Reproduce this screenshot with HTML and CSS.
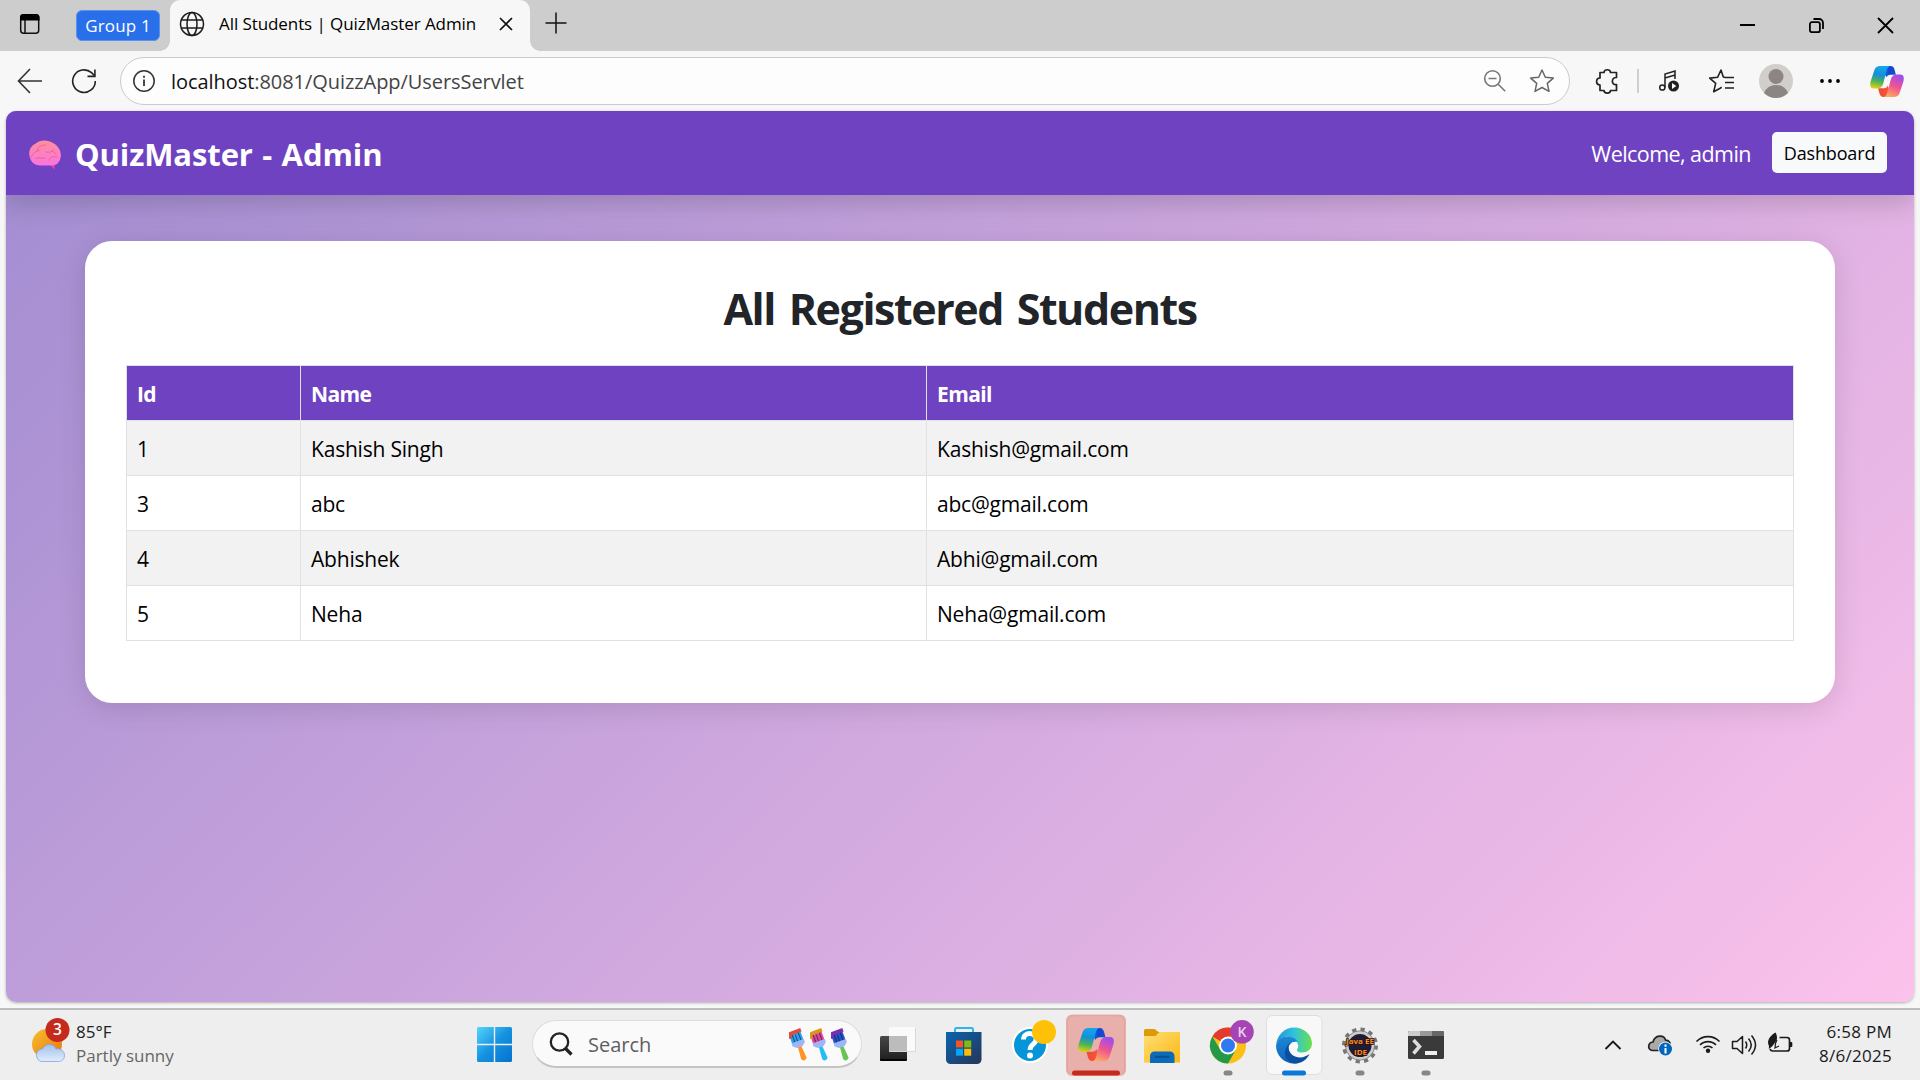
FILE: index.html
```html
<!DOCTYPE html>
<html lang="en">
<head>
<meta charset="utf-8">
<title>All Students | QuizMaster Admin</title>
<link rel="stylesheet" href="styles.css">
</head>
<body>
<svg class="defs" width="0" height="0" aria-hidden="true">
  <defs>
    <linearGradient id="cpBlue" x1="0.3" y1="0" x2="0.1" y2="1"><stop offset="0" stop-color="#10a5ee"/><stop offset=".35" stop-color="#168fd6"/><stop offset=".65" stop-color="#4db356"/><stop offset="1" stop-color="#f8d30b"/></linearGradient>
    <linearGradient id="cpNavy" x1="0" y1="0" x2="1" y2="0"><stop offset="0" stop-color="#10a0ee"/><stop offset=".6" stop-color="#1244cf"/><stop offset="1" stop-color="#1450d6"/></linearGradient>
    <linearGradient id="cpPink" x1="0.7" y1="0" x2="0.3" y2="1"><stop offset="0" stop-color="#9a4df0"/><stop offset=".5" stop-color="#ef5393"/><stop offset="1" stop-color="#ffab5c"/></linearGradient>
    <linearGradient id="cpRed" x1="0" y1="0" x2="1" y2="0"><stop offset="0" stop-color="#ff9a52"/><stop offset="0.5" stop-color="#f4503c"/><stop offset="1" stop-color="#ee4b35"/></linearGradient>
    <linearGradient id="win" x1="0" y1="0" x2="1" y2="1"><stop offset="0" stop-color="#55d5fb"/><stop offset=".5" stop-color="#1592e0"/><stop offset="1" stop-color="#0671cf"/></linearGradient>
    <linearGradient id="sun" x1="0" y1="0" x2="1" y2="1"><stop offset="0" stop-color="#f2c22d"/><stop offset="1" stop-color="#f0700f"/></linearGradient>
    <linearGradient id="cloud" x1="0" y1="0" x2="0" y2="1"><stop offset="0" stop-color="#9fc0ee"/><stop offset="1" stop-color="#e3edfa"/></linearGradient>
    <linearGradient id="brain" x1="0" y1="0" x2="0" y2="1"><stop offset="0" stop-color="#ff8f9c"/><stop offset="1" stop-color="#fb73df"/></linearGradient>
    <linearGradient id="store" x1="0" y1="0" x2="1" y2="1"><stop offset="0" stop-color="#0a64b0"/><stop offset="1" stop-color="#263558"/></linearGradient>
    <linearGradient id="folder" x1="0" y1="0" x2="1" y2="1"><stop offset="0" stop-color="#ffde76"/><stop offset="1" stop-color="#fcb813"/></linearGradient>
    <linearGradient id="edgeTop" x1="0" y1="0" x2="1" y2="0"><stop offset="0" stop-color="#1f93d8"/><stop offset=".5" stop-color="#30c2dc"/><stop offset="1" stop-color="#6be04a"/></linearGradient>
    <linearGradient id="edgeLeft" x1="0" y1="0" x2="0" y2="1"><stop offset="0" stop-color="#1c88d4"/><stop offset="1" stop-color="#0f62bd"/></linearGradient>
    <linearGradient id="dark" x1="0" y1="0" x2="0" y2="1"><stop offset="0" stop-color="#484848"/><stop offset="1" stop-color="#1d1d1d"/></linearGradient>
    <symbol id="copilot" viewBox="0 0 36 33">
      <path fill="url(#cpNavy)" d="M10 0H22C25.500 0 26 3.500 27.500 9.200H23C20 9.200 18.500 9.500 17.500 12L15 8Z"/>
      <path fill="url(#cpRed)" transform="rotate(180 18 16.500)" d="M10 0H22C25.500 0 26 3.500 27.500 9.200H23C20 9.200 18.500 9.500 17.500 12L15 8Z"/>
      <path fill="url(#cpBlue)" d="M11 0H22C18.500 0 17.800 4 16.500 9L14 18.500C13 22 11 24 7.500 24H4C0 24-.5 20.500 .7 16L4.500 4.500C5.600 1.300 7.500 0 11 0Z"/>
      <path fill="url(#cpPink)" d="M25 33H14C17.500 33 18.200 29 19.500 24L22 14.500C23 11 25 9 28.500 9H32C36 9 36.500 12.500 35.300 17L31.500 28.500C30.400 31.700 28.500 33 25 33Z"/>
    </symbol>
    <symbol id="brush" viewBox="0 0 20 34">
      <g transform="rotate(-20 10 17)">
        <path fill="currentColor" d="M8.300 18h3.400l1.100 13a2.900 2.900 0 0 1-5.600 0Z"/>
        <path class="bristle" d="M4 4h12v11H4z"/>
        <path fill="none" stroke="#20243d" stroke-width="1" opacity=".7" d="M7 5v8M10 6v7M13.500 5v8"/>
        <path fill="#9fb6f4" d="M3.500 13h13v3.300l-3.500 2.900H7l-3.500-2.900z"/>
        <path class="tip" d="M3 1.500h14v4l-2.500-1-2 1.500-2.500-1.500-2 1.500-2-1-.5 3.500-2.500-.5z"/>
      </g>
    </symbol>
  </defs>
</svg>

<header class="tabstrip">
  <svg class="tab-actions" width="24" height="24" viewBox="0 0 24 24"><rect x="2.700" y="2.700" width="18" height="18.500" rx="3" fill="none" stroke="#111" stroke-width="1.500"/><path d="M2 8.500V5.500a3.500 3.500 0 0 1 3.500-3.500h12.500a3.500 3.500 0 0 1 3.500 3.500v3z"/><path d="M7 8v13" stroke="#111" stroke-width="1.500"/></svg>
  <span class="group-chip">Group 1</span>
  <div class="tab">
    <svg width="26" height="26" viewBox="0 0 26 26" fill="none" stroke="#1c1c1c" stroke-width="1.500"><circle cx="13" cy="13" r="11.500"/><ellipse cx="13" cy="13" rx="5" ry="11.500"/><path d="M2.500 9h21M2.500 17h21"/></svg>
    <span class="tab-title">All Students | QuizMaster Admin</span>
    <svg class="tab-close" width="14" height="14" viewBox="0 0 14 14" stroke="#111" stroke-width="1.700"><path d="M1 1l12 12M13 1L1 13"/></svg>
  </div>
  <svg class="new-tab" width="22" height="22" viewBox="0 0 22 22" stroke="#111" stroke-width="1.500"><path d="M11 .5v21M.5 11h21"/></svg>
  <div class="window-buttons">
    <svg width="17" height="17" viewBox="0 0 17 17" stroke="#000" stroke-width="2"><path d="M1 8h15"/></svg>
    <svg width="17" height="17" viewBox="0 0 17 17" fill="none" stroke="#000" stroke-width="1.800"><rect x="1.900" y="5.200" width="10" height="10" rx="2"/><path d="M5.500 2h5.500a4 4 0 0 1 4 4v6"/></svg>
    <svg width="17" height="17" viewBox="0 0 17 17" stroke="#000" stroke-width="1.800"><path d="M1 1l15 15M16 1L1 16"/></svg>
  </div>
</header>

<div class="toolbar">
  <svg class="back" width="26" height="26" viewBox="0 0 26 26" fill="none" stroke="#333" stroke-width="1.600"><path d="M13 1L1.500 13 13 25M1.500 13H25"/></svg>
  <svg class="reload" width="26" height="26" viewBox="0 0 26 26" fill="none" stroke="#222" stroke-width="1.600"><path d="M24.300 13A11.300 11.300 0 1 1 20.500 4.700L23.800 8"/><path d="M23.900 1.500V8.400H16.500"/></svg>
  <div class="address">
    <svg width="24" height="24" viewBox="0 0 24 24" fill="none" stroke="#333" stroke-width="1.500"><circle cx="12" cy="12" r="10.200"/><path stroke-width="1.800" d="M12 10.500v6.500M12 6.800v2"/></svg>
    <span class="url"><span class="host">localhost</span>:8081/QuizzApp/UsersServlet</span>
    <svg class="zoom-out" width="24" height="24" viewBox="0 0 24 24" fill="none" stroke="#777" stroke-width="1.600"><circle cx="9.500" cy="9.500" r="7.800"/><path d="M15.200 15.200l7 7M5.500 9.500h8"/></svg>
    <svg class="favorite" width="26" height="26" viewBox="0 0 26 26" fill="none" stroke="#666" stroke-width="1.500" stroke-linejoin="round"><path d="M13 2l3.300 7.200 8 .9-6 5.300 1.700 8L13 19.500l-7 3.900 1.700-8-6-5.300 8-.9z"/></svg>
  </div>
  <svg class="extensions" width="26" height="26" viewBox="0 0 26 26" fill="none" stroke="#222" stroke-width="1.700" stroke-linejoin="round"><path d="M6 4.500H10C10 .8 16.500 .8 16.500 4.500H22.500V9.500C17 9 17 17.500 22.500 16.500V22.500H16.500C16.500 26 10 26 10 22.500H6V17C1.500 17 1.500 10 6 10Z"/></svg>
  <span class="divider"></span>
  <svg class="media" width="24" height="26" viewBox="0 0 24 26" fill="none" stroke="#222" stroke-width="1.500"><circle cx="4.300" cy="19.500" r="2.600"/><path d="M7 19.500V6l10-3v8M7 10l10-3"/><circle cx="15.500" cy="18" r="5.500" fill="#222" stroke="none"/><path fill="#fff" stroke="none" d="M14 15v6l4.300-3z"/></svg>
  <svg class="favorites-list" width="28" height="26" viewBox="0 0 28 26" fill="none" stroke="#222" stroke-width="1.600" stroke-linejoin="round"><path d="M17.500 9.500L15.300 9 13 2 9.700 9.200l-8 .9 6 5.300-2 8.300 6-3.200 2-1.200M17 9.500h9M17 14.500h9M17 20h9"/></svg>
  <svg class="avatar" width="34" height="34" viewBox="0 0 34 34"><circle cx="17" cy="17" r="17" fill="#d1cecb"/><circle cx="17" cy="12.500" r="7.500" fill="#8b8683"/><path fill="#8b8683" d="M5 29a13 13 0 0 1 24 0a17 17 0 0 1-24 0z"/></svg>
  <svg class="more" width="22" height="6" viewBox="0 0 22 6"><circle cx="3" cy="3" r="1.900"/><circle cx="11" cy="3" r="1.900"/><circle cx="19" cy="3" r="1.900"/></svg>
  <svg class="copilot-button" width="34" height="31"><use href="#copilot"/></svg>
</div>

<main class="page">
  <nav class="navbar">
    <svg class="brain" width="34" height="30" viewBox="0 0 34 30"><path fill="#e93fa6" d="M20 22h7l-.5 7.500-5-5z"/><path fill="url(#brain)" d="M2.500 19C0 14 1 7 7 4C12-.5 20-.5 25 3C31 6 34 13 32.500 18C31.500 23 28 25.500 23 25.500H12C7 25.500 3.500 22.500 2.500 19Z"/><path fill="none" stroke="#ec6398" stroke-width="1" stroke-linecap="round" d="M3.500 17C4 13 8 11.500 12 10M9 11c0-4 4-6 9-6M18 12c4 1 6 0 8-3M8 18.500c3-2 5 1 9-.5M21 20c1-3 4-4 8-3M24 11c2 1 3 2 4 3"/></svg>
    <span class="brand">QuizMaster - Admin</span>
    <span class="welcome">Welcome, admin</span>
    <a class="dashboard">Dashboard</a>
  </nav>
  <section class="card">
    <h1>All Registered Students</h1>
    <table>
      <colgroup><col class="col-id"><col class="col-name"><col></colgroup>
      <thead><tr><th>Id</th><th>Name</th><th>Email</th></tr></thead>
      <tbody>
        <tr><td>1</td><td>Kashish Singh</td><td>Kashish@gmail.com</td></tr>
        <tr><td>3</td><td>abc</td><td>abc@gmail.com</td></tr>
        <tr><td>4</td><td>Abhishek</td><td>Abhi@gmail.com</td></tr>
        <tr><td>5</td><td>Neha</td><td>Neha@gmail.com</td></tr>
      </tbody>
    </table>
  </section>
</main>

<footer class="taskbar">
  <svg class="weather" width="44" height="50" viewBox="0 0 44 50"><circle cx="17" cy="26" r="15" fill="url(#sun)"/><path fill="url(#cloud)" stroke="#7fa5e6" stroke-width=".8" d="M11 43.500a6.500 6.500 0 0 1-1-12C12 31 12 31 12.500 31C15 25 24 25 26 31c5-1 8.500 2.500 8.500 6.500s-3 6-6 6z"/><circle cx="27.500" cy="12" r="12" fill="#c42b1c"/><text x="27.500" y="17.300" text-anchor="middle" font-size="15.500" font-weight="600" fill="#fff">3</text></svg>
  <div class="weather-text"><span>85°F</span><span class="muted">Partly sunny</span></div>
  <svg class="start" width="35" height="35" viewBox="0 0 35 35"><path fill="url(#win)" d="M1.500 0H16.800V16.800H0V1.500A1.500 1.500 0 0 1 1.500 0ZM18.200 0H33.500A1.500 1.500 0 0 1 35 1.500V16.800H18.200ZM0 18.200H16.800V35H1.500A1.500 1.500 0 0 1 0 33.500ZM18.200 18.200H35V33.500A1.500 1.500 0 0 1 33.500 35H18.200Z"/></svg>
  <div class="search">
    <svg width="24" height="24" viewBox="0 0 24 24" fill="none" stroke="#222"><circle cx="10.500" cy="10" r="8.700" stroke-width="2.300"/><path stroke-width="3.200" d="M16.500 16.500l6 6"/></svg>
    <span>Search</span>
    <div class="brushes">
      <svg class="brush-a" width="20" height="34"><use href="#brush"/></svg>
      <svg class="brush-b" width="20" height="34"><use href="#brush"/></svg>
      <svg class="brush-c" width="20" height="34"><use href="#brush"/></svg>
    </div>
  </div>
  <div class="apps">
    <svg viewBox="0 0 66 70"><rect x="15" y="26" width="27" height="25" rx="1.500" fill="url(#dark)"/><path d="M15 49h27v.5a1.500 1.500 0 0 1-1.500 1.500h-24a1.500 1.500 0 0 1-1.500-1.500z" fill="#050505"/><rect x="24" y="17" width="27" height="25" rx="1.500" fill="#fafafa"/><path fill="#bcbcbc" d="M24 26h18v15.500H25.500a1.500 1.500 0 0 1-1.500-1.500z"/><path fill="none" stroke="#d8d8d8" d="M24.500 41.500h26V18"/></svg>
    <svg viewBox="0 0 66 70"><path fill="none" stroke="#2bb7ec" stroke-width="2" d="M24 25v-5.500a1.500 1.500 0 0 1 1.500-1.500h15a1.500 1.500 0 0 1 1.500 1.500V25"/><path fill="url(#store)" d="M15 22h35.500v27.500a4.500 4.500 0 0 1-4.500 4.500H19.500a4.500 4.500 0 0 1-4.500-4.500z"/><path fill="#f35325" d="M25 30.500h7v7h-7z"/><path fill="#81bc06" d="M33.200 30.500h7v7h-7z"/><path fill="#05a6f0" d="M25 38.700h7v7h-7z"/><path fill="#ffba08" d="M33.200 38.700h7v7h-7z"/></svg>
    <svg viewBox="0 0 66 70"><circle cx="33" cy="35" r="17" fill="#0595d8" stroke="#fff" stroke-width="2"/><path d="M26.500 29.500C26.500 21 39.500 22 39 29.500C39 34.500 33 34 33 40" fill="none" stroke="#fff" stroke-width="4.800"/><circle cx="33" cy="45.500" r="3" fill="#fff"/><circle cx="47" cy="22" r="12" fill="#ffc107"/></svg>
    <svg viewBox="0 0 66 70"><rect x="3" y="4.500" width="60" height="61.500" rx="6" fill="#e8afab"/><rect x="4.300" y="5.700" width="57.400" height="59" rx="6" fill="none" stroke="#e2a3a0"/><use href="#copilot" x="15" y="17.500" width="36" height="34"/><rect x="9" y="60.500" width="48" height="5" rx="2.500" fill="#c42b1c"/></svg>
    <svg viewBox="0 0 66 70"><path fill="#dc9b05" d="M15 20.500a1.500 1.500 0 0 1 1.500-1.500h9l4 3h19v6H15z"/><path fill="url(#folder)" d="M15 26h11.500l4-4H50a1 1 0 0 1 1 1v29.500H15z"/><path fill="#0b6bb8" d="M21 53v-7a4.500 4.500 0 0 1 4.500-4.500h15.500a4.500 4.500 0 0 1 4.500 4.500v7z"/><path stroke="#075095" stroke-width="2" d="M26 46.800h14.500"/></svg>
    <svg viewBox="0 0 66 70"><circle cx="33" cy="35.500" r="18" fill="#fbc013"/><path fill="#e33b2e" d="M33 35.500L17.400 26.500A18 18 0 0 1 48.600 26.500H33z"/><path fill="#249a48" d="M17.400 26.500A18 18 0 0 0 33 53.500L41 39.500 33 35.500 25.500 40z"/><circle cx="33" cy="35.500" r="9" fill="#fff"/><circle cx="33" cy="35.500" r="7" fill="#3179ef"/><circle cx="47" cy="21.800" r="11.800" fill="#a644b6"/><text x="47" y="27" text-anchor="middle" font-size="14" font-weight="600" fill="#ead0f0">K</text><rect x="28.500" y="60.500" width="9" height="5" rx="2.500" fill="#868686"/></svg>
    <svg viewBox="0 0 66 70"><rect x="5.500" y="5.500" width="55.500" height="59" rx="6" fill="#f8f8f8" stroke="#dedede"/><g transform="translate(15 17.500)"><path fill="url(#edgeTop)" d="M0 18C1 7 9 0 18 0C28 0 36 7 36 16C36 22 31 25 26 25C22 25 20.500 23.500 21 22C22 21 22.500 19 22 17C21 13 17 9 11 9C6 9 2 13 0 18Z"/><path fill="url(#edgeLeft)" d="M0 18C2 12 6 9 11 9C17 9 20.500 11.500 21.500 14.500C16 13 12.500 17 12.500 21C12.500 29 18 33 24 35C22 36 19 36 18 36C8 36 0 28 0 18Z"/><path fill="#0c4fa0" d="M12.500 20C13 26.500 18.500 30 24 30C28 30 31 28 33.500 26.500C31 32 26 36 18.500 36C11 35 8 29 9 24C9.600 20.500 12 16.500 15 15C13 17 12.500 18.500 12.500 20Z"/></g><rect x="21" y="60.500" width="24" height="5" rx="2.500" fill="#0a78d4"/></svg>
    <svg viewBox="0 0 66 70"><circle cx="33" cy="35.500" r="16" fill="none" stroke="#777" stroke-width="4" stroke-dasharray="4.200 4.180"/><circle cx="33" cy="35.500" r="13" fill="#201c38" stroke="#ccc" stroke-width="3"/><circle cx="33" cy="35.500" r="14.700" fill="none" stroke="#777" stroke-width=".8"/><g class="java" font-size="7.500" font-weight="700" text-anchor="middle" fill="#f58a2c" stroke="#28150c" stroke-width="1.300" paint-order="stroke"><text x="33" y="34" textLength="28" lengthAdjust="spacingAndGlyphs">Java EE</text><text x="33.500" y="44.500" textLength="13" lengthAdjust="spacingAndGlyphs">IDE</text></g><rect x="28.500" y="60.500" width="9" height="5" rx="2.500" fill="#868686"/></svg>
    <svg viewBox="0 0 66 70"><rect x="15" y="21" width="36" height="28" rx="1.500" fill="#3a3a3a"/><path fill="#ccc" d="M16.500 21H27v5H15v-3.500a1.500 1.500 0 0 1 1.500-1.500z"/><path fill="#999" d="M27 21h12v5H27z"/><path fill="#676767" d="M39 21h10.500a1.500 1.500 0 0 1 1.500 1.500V26H39z"/><path fill="none" stroke="#ddd" stroke-width="3.500" d="M20.500 30l6 6.500-6 7"/><path stroke="#eee" stroke-width="4" d="M32 43h12"/><rect x="28.500" y="60.500" width="9" height="5" rx="2.500" fill="#868686"/></svg>
  </div>
  <div class="tray">
    <svg class="chevron" width="18" height="12" viewBox="0 0 18 12" fill="none" stroke="#1a1a1a" stroke-width="1.900"><path d="M1.500 10L9 2.500l7.500 7.500"/></svg>
    <svg class="onedrive" width="26" height="24" viewBox="0 0 26 24"><path fill="#a9a9a9" stroke="#222" stroke-width="1.700" d="M6 17.500C0 17.500 .5 9.500 6 9C8 1.500 17 1.500 18.500 7C20.500 7 22 8 23 10L14 17.500z"/><circle cx="18.500" cy="16" r="7.300" fill="#eee"/><circle cx="18.500" cy="16" r="6.500" fill="#0067c0"/><path stroke="#fff" stroke-width="2" d="M18.500 15v5.500M18.500 11.500v2.200"/></svg>
    <svg class="wifi" width="26" height="20" viewBox="0 0 26 20" fill="none" stroke="#1a1a1a" stroke-width="1.600"><path d="M1.500 7.500a16 16 0 0 1 23 0M5 11a11.200 11.200 0 0 1 16 0M8.500 14a6.500 6.500 0 0 1 9 0"/><circle cx="13" cy="16.800" r="2.200" fill="#1a1a1a" stroke="none"/></svg>
    <svg class="volume" width="26" height="22" viewBox="0 0 26 22" fill="none" stroke="#1a1a1a" stroke-width="1.500"><path stroke-linejoin="round" d="M1.500 7.500H6L11.500 2.500v17L6 14.500H1.500z"/><path d="M14.500 7.500q2.500 3.500 0 7M17.500 4.500q5.500 6.500 0 13M20.500 1.500q8 9.500 0 19"/></svg>
    <svg class="battery" width="26" height="22" viewBox="0 0 26 22" fill="none" stroke="#1a1a1a" stroke-width="1.700"><path d="M12.500 5.500H20a2.500 2.500 0 0 1 2.500 2.500v8.500a2.500 2.500 0 0 1-2.500 2.500H6a3 3 0 0 1-3-2"/><path fill="#1a1a1a" stroke="none" d="M23 10h1.500a.8.800 0 0 1 .8.800v3.400a.8.800 0 0 1-.8.800H23zM8.500 .5C10.500 4 10.500 8 8.500 10L5 14.500 1.800 17 2 14C-.5 10 2 4 8.500 .5z"/><path stroke-width="1.200" d="M10 8c-2.500 4-1.500 6-2 8l4-2"/></svg>
    <div class="clock"><span>6:58 PM</span><span>8/6/2025</span></div>
  </div>
</footer>
</body>
</html>
```
FILE: styles.css
```css
* { box-sizing: border-box; }

body {
  margin: 0;
  width: 1920px;
  height: 1080px;
  overflow: hidden;
  display: flex;
  flex-direction: column;
  background: #f7f7f7;
  font-family: "Open Sans", "Noto Sans", sans-serif;
  color: #000;
}

svg { display: block; flex: none; }
.defs { position: absolute; }
span { white-space: nowrap; }

/* Browser tab strip */
.tabstrip {
  height: 51px;
  flex: none;
  display: flex;
  align-items: flex-start;
  background: #cdcdcd;
}
.tab-actions { margin: 12px 0 0 18px; }
.group-chip {
  width: 84px;
  height: 31px;
  margin: 10px 0 0 34px;
  border: 1px solid #5a90f0;
  border-radius: 6px;
  background: #296fea;
  color: #fff;
  font-size: 17px;
  line-height: 30px;
  letter-spacing: .15px;
  text-align: center;
}
.tab {
  position: relative;
  width: 360px;
  height: 51px;
  margin-left: 10px;
  padding: 0 17px 3px 9px;
  display: flex;
  align-items: center;
  background: #f7f7f7;
  border-radius: 10px 10px 0 0;
}
.tab::before,
.tab::after {
  content: "";
  position: absolute;
  bottom: 0;
  width: 10px;
  height: 10px;
}
.tab::before { left: -10px; background: radial-gradient(circle at 0 0, #cdcdcd 9.5px, #f7f7f7 10px); }
.tab::after { right: -10px; background: radial-gradient(circle at 100% 0, #cdcdcd 9.5px, #f7f7f7 10px); }
.tab-title { margin: -1px 0 0 14px; font-size: 17px; letter-spacing: -.08px; }
.tab-close { margin-left: auto; }
.new-tab { margin: 12px 0 0 15px; }
.window-buttons { display: flex; gap: 52px; margin: 17px 26px 0 auto; }

/* Browser toolbar */
.toolbar {
  height: 60px;
  flex: none;
  display: flex;
  align-items: center;
}
.back { margin-left: 17px; }
.reload { margin-left: 28px; }
.address {
  width: 1450px;
  height: 48px;
  margin-left: 23px;
  padding: 0 14px 0 11px;
  display: flex;
  align-items: center;
  background: #fdfdfd;
  border: 1.500px solid #cbcbcb;
  border-radius: 24px;
}
.url { margin-left: 15px; font-size: 20px; letter-spacing: -.06px; color: #444; }
.host { color: #111; }
.zoom-out { margin-left: auto; }
.favorite { margin-left: 22px; }
.extensions { margin-left: 24px; }
.divider { width: 2px; height: 24px; margin-left: 17px; background: #cfcfcf; }
.media { margin-left: 19px; }
.favorites-list { margin-left: 26px; }
.avatar { margin-left: 23px; }
.more { margin-left: 26px; }
.copilot-button { margin-left: 29px; }

/* Quiz application page */
.page {
  width: 1908px;
  height: 891px;
  margin-left: 6px;
  flex: none;
  overflow: hidden;
  border-radius: 10px;
  box-shadow: 0 1px 3px rgba(0, 0, 0, .3);
  background: linear-gradient(135deg, #a18cd1, #fbc2eb);
}
.navbar {
  position: relative;
  height: 84px;
  padding: 0 27px 0 22px;
  display: flex;
  align-items: center;
  background: #6f42c1;
  color: #fff;
  box-shadow: 0 10px 22px rgba(0, 0, 0, .15);
}
.brain { margin-top: 4px; }
.brand { margin: 2px 0 0 13px; font-size: 31px; font-weight: 700; letter-spacing: -.1px; word-spacing: 1.500px; }
.welcome { margin: 1px 21px 0 auto; font-size: 21.500px; letter-spacing: -.55px; }
.dashboard {
  width: 115px;
  height: 41px;
  margin-top: -1px;
  border-radius: 5px;
  background: #f8f9fa;
  color: #000;
  font-size: 18px;
  line-height: 42px;
  letter-spacing: -.15px;
  text-align: center;
}
.card {
  width: 1750px;
  height: 462px;
  margin: 46px 0 0 79px;
  padding: 43px 41px 0;
  border-radius: 27px;
  background: #fff;
  box-shadow: 0 5px 28px rgba(0, 0, 0, .12);
}
.card h1 {
  margin: 0 0 32px;
  font-size: 43px;
  line-height: 49px;
  letter-spacing: -1.450px;
  word-spacing: 4px;
  text-align: center;
  color: #212529;
}
.card table {
  width: 1668px;
  table-layout: fixed;
  border-collapse: collapse;
  font-size: 21px;
  letter-spacing: -.2px;
}
.col-id { width: 174px; }
.col-name { width: 626px; }
.card th,
.card td {
  height: 55px;
  padding: 1px 10px 0;
  border: 1px solid #dee2e6;
  line-height: 28px;
  text-align: left;
}
.card th { background: #6f42c1; color: #fff; font-weight: 700; letter-spacing: -.6px; }
.card tbody tr:nth-child(odd) { background: #f2f2f2; }

/* Desktop taskbar */
.taskbar {
  height: 72px;
  margin-top: 6px;
  flex: none;
  display: flex;
  align-items: center;
  border-top: 2px solid #bdbdbd;
  background: #eee;
}
.weather { margin: -4px 0 0 30px; }
.weather-text {
  width: 120px;
  margin: -2px 0 0 2px;
  display: flex;
  flex-direction: column;
  font-size: 17px;
  line-height: 24px;
  color: #222;
}
.muted { color: #666; }
.start { margin: -1px 0 0 281px; }
.search {
  width: 330px;
  height: 48px;
  margin-left: 20px;
  margin-top: -2px;
  padding: 0 10px 0 16px;
  display: flex;
  align-items: center;
  border: 1.500px solid #ddd;
  border-bottom: 2px solid #c4c4c4;
  border-radius: 24px;
  background: #fafafa;
  font-size: 20px;
  color: #5f5f5f;
}
.search > span { margin: 2px 0 0 15px; }
.brushes { display: flex; gap: 1px; margin: 2px 0 0 auto; }
.brush-a { --tip: #e64a36; color: #ff9424; fill: #29a3f2; }
.brush-b { --tip: #d99a13; color: #25bdf4; fill: #e6429c; }
.brush-c { --tip: #7c2cad; color: #66c553; fill: #2452ca; }
.tip { fill: var(--tip); }
.apps { display: flex; margin: -1px 0 0 3px; }
.apps svg { width: 66px; height: 70px; }
.tray { flex: 1; display: flex; align-items: center; margin-right: 28px; }
.chevron { margin-left: 145px; }
.onedrive { margin-left: 25px; }
.wifi { margin-left: 22px; margin-top: -3px; }
.volume { margin-left: 10px; margin-top: -1px; }
.battery { margin-left: 10px; margin-top: -4px; }
.clock {
  margin: -2px 0 0 auto;
  display: flex;
  flex-direction: column;
  align-items: flex-end;
  font-size: 17px;
  line-height: 24px;
  letter-spacing: .28px;
  color: #1a1a1a;
}
```
